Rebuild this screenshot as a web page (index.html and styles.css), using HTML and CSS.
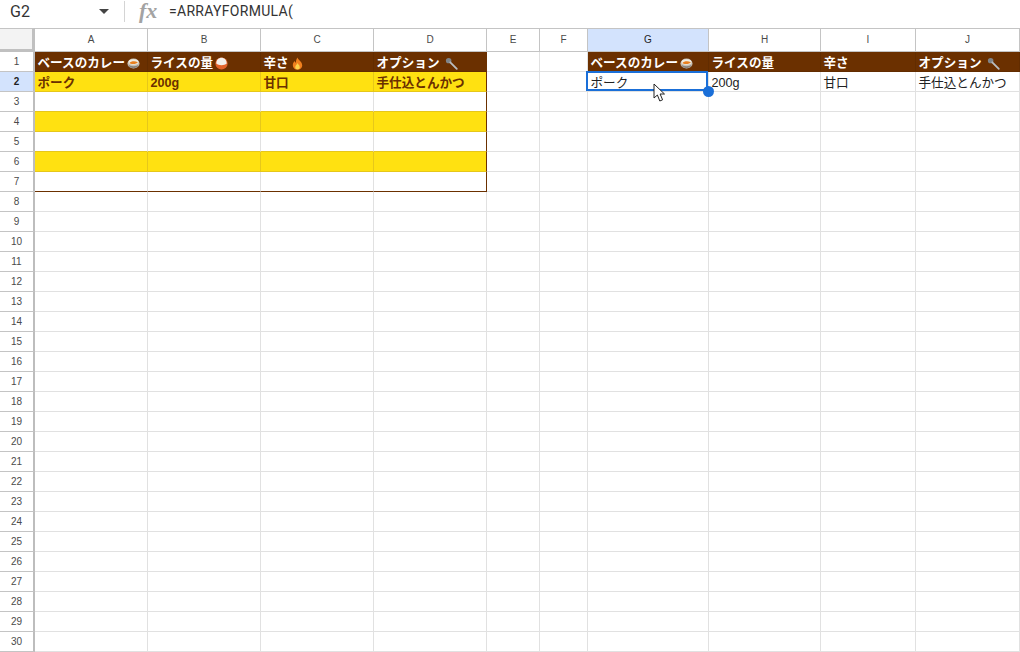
FILE: index.html
```html
<!DOCTYPE html>
<html lang="ja">
<head>
<meta charset="utf-8">
<title>Sheet</title>
<link rel="stylesheet" href="styles.css">
</head>
<body>
<svg class="defs" width="0" height="0" aria-hidden="true">
<symbol id="curry" viewBox="0 0 14 14"><ellipse cx="7" cy="7" rx="6.500" ry="5.500" fill="#c9c2b6"/><ellipse cx="7" cy="5.400" rx="5.400" ry="3" fill="#f0ece0"/><path d="M2.600 6.400c1.500-2 6-2.600 9-.8-.4 2-7.400 2.800-9 .8z" fill="#e8801f"/><path d="M1.400 8.200c2 2.400 9.200 2.400 11.200 0-.6 3-2.600 3.800-5.600 3.800s-5-.8-5.600-3.800z" fill="#8a847c"/></symbol>
<symbol id="rice" viewBox="0 0 16 16"><circle cx="8" cy="8" r="7.500" fill="#e2632a"/><path d="M1.600 8C1.600 3.600 4.500 1 8 1s6.400 2.600 6.400 7c-1.500 1.400-3.800 2-6.400 2s-4.900-.6-6.400-2z" fill="#f1efeb"/></symbol>
<symbol id="fire" viewBox="0 0 14 16"><path d="M7 .5c.6 3 5.800 5 5.800 9.500 0 3.400-2.700 5.500-5.800 5.500S1.200 13.400 1.200 10c0-2.400 1.300-3.700 2.300-5 .3 1.200.8 1.800 1.500 2.100C5 4.800 5.600 2.400 7 .5z" fill="#f0801e"/><path d="M7 7.500c.4 1.600 2.800 2.800 2.800 5 0 1.700-1.300 2.800-2.800 2.800s-2.800-1.100-2.800-2.800c0-2.200 2.300-3.200 2.800-5z" fill="#fbd24c"/></symbol>
<symbol id="spoon" viewBox="0 0 16 16"><ellipse cx="4.500" cy="4.500" rx="3.400" ry="3.200" fill="#7f8488"/><path d="M6.500 6.500l8 8" stroke="#b9bdc0" stroke-width="2.200" stroke-linecap="round"/></symbol>
</svg>
<header class="bar">
  <span class="ref">G2</span>
  <span class="caret"></span>
  <span class="sep"></span>
  <span class="fx">fx</span>
  <span class="formula">=ARRAYFORMULA(</span>
</header>
<table class="sheet">
<colgroup><col class="w0"><col class="w1"><col class="w1"><col class="w1"><col class="w1"><col class="w2"><col class="w3"><col class="w4"><col class="w5"><col class="w6"><col class="w7"></colgroup>
<thead>
<tr><th class="corner"></th><th>A</th><th>B</th><th>C</th><th>D</th><th>E</th><th>F</th><th class="on">G</th><th>H</th><th>I</th><th>J</th></tr>
</thead>
<tbody>
<tr><th>1</th><td class="hd"><span class="t">ベースのカレー<svg class="ic"><use href="#curry"/></svg></span></td><td class="hd"><span class="t">ライスの量<svg class="ic"><use href="#rice"/></svg></span></td><td class="hd"><span class="t">辛さ<svg class="ic"><use href="#fire"/></svg></span></td><td class="hd re"><span class="t">オプション<svg class="ic gap"><use href="#spoon"/></svg></span></td><td></td><td></td><td class="hd"><span class="t">ベースのカレー<svg class="ic"><use href="#curry"/></svg></span></td><td class="hd"><span class="t">ライスの量</span></td><td class="hd"><span class="t">辛さ</span></td><td class="hd"><span class="t">オプション<svg class="ic gap"><use href="#spoon"/></svg></span></td></tr>
<tr><th class="on">2</th><td class="ye">ポーク</td><td class="ye">200g</td><td class="ye">甘口</td><td class="ye re">手仕込とんかつ</td><td></td><td></td><td class="sel">ポーク<span class="box"></span><span class="handle"></span><svg class="cursor" viewBox="0 0 14 20"><path d="M1 1v14l3.400-3 2.400 6 2.800-1.200-2.500-5.800h4.400z" fill="#fff" stroke="#222" stroke-width="1"/></svg></td><td class="tx">200g</td><td class="tx">甘口</td><td class="tx">手仕込とんかつ</td></tr>
<tr><th>3</th><td class="pre"></td><td class="pre"></td><td class="pre"></td><td class="pre re"></td><td></td><td></td><td></td><td></td><td></td><td></td></tr>
<tr><th>4</th><td class="ye"></td><td class="ye"></td><td class="ye"></td><td class="ye re"></td><td></td><td></td><td></td><td></td><td></td><td></td></tr>
<tr><th>5</th><td class="pre"></td><td class="pre"></td><td class="pre"></td><td class="pre re"></td><td></td><td></td><td></td><td></td><td></td><td></td></tr>
<tr><th>6</th><td class="ye"></td><td class="ye"></td><td class="ye"></td><td class="ye re"></td><td></td><td></td><td></td><td></td><td></td><td></td></tr>
<tr><th>7</th><td class="be"></td><td class="be"></td><td class="be"></td><td class="be re"></td><td></td><td></td><td></td><td></td><td></td><td></td></tr>
<tr><th>8</th><td></td><td></td><td></td><td></td><td></td><td></td><td></td><td></td><td></td><td></td></tr>
<tr><th>9</th><td></td><td></td><td></td><td></td><td></td><td></td><td></td><td></td><td></td><td></td></tr>
<tr><th>10</th><td></td><td></td><td></td><td></td><td></td><td></td><td></td><td></td><td></td><td></td></tr>
<tr><th>11</th><td></td><td></td><td></td><td></td><td></td><td></td><td></td><td></td><td></td><td></td></tr>
<tr><th>12</th><td></td><td></td><td></td><td></td><td></td><td></td><td></td><td></td><td></td><td></td></tr>
<tr><th>13</th><td></td><td></td><td></td><td></td><td></td><td></td><td></td><td></td><td></td><td></td></tr>
<tr><th>14</th><td></td><td></td><td></td><td></td><td></td><td></td><td></td><td></td><td></td><td></td></tr>
<tr><th>15</th><td></td><td></td><td></td><td></td><td></td><td></td><td></td><td></td><td></td><td></td></tr>
<tr><th>16</th><td></td><td></td><td></td><td></td><td></td><td></td><td></td><td></td><td></td><td></td></tr>
<tr><th>17</th><td></td><td></td><td></td><td></td><td></td><td></td><td></td><td></td><td></td><td></td></tr>
<tr><th>18</th><td></td><td></td><td></td><td></td><td></td><td></td><td></td><td></td><td></td><td></td></tr>
<tr><th>19</th><td></td><td></td><td></td><td></td><td></td><td></td><td></td><td></td><td></td><td></td></tr>
<tr><th>20</th><td></td><td></td><td></td><td></td><td></td><td></td><td></td><td></td><td></td><td></td></tr>
<tr><th>21</th><td></td><td></td><td></td><td></td><td></td><td></td><td></td><td></td><td></td><td></td></tr>
<tr><th>22</th><td></td><td></td><td></td><td></td><td></td><td></td><td></td><td></td><td></td><td></td></tr>
<tr><th>23</th><td></td><td></td><td></td><td></td><td></td><td></td><td></td><td></td><td></td><td></td></tr>
<tr><th>24</th><td></td><td></td><td></td><td></td><td></td><td></td><td></td><td></td><td></td><td></td></tr>
<tr><th>25</th><td></td><td></td><td></td><td></td><td></td><td></td><td></td><td></td><td></td><td></td></tr>
<tr><th>26</th><td></td><td></td><td></td><td></td><td></td><td></td><td></td><td></td><td></td><td></td></tr>
<tr><th>27</th><td></td><td></td><td></td><td></td><td></td><td></td><td></td><td></td><td></td><td></td></tr>
<tr><th>28</th><td></td><td></td><td></td><td></td><td></td><td></td><td></td><td></td><td></td><td></td></tr>
<tr><th>29</th><td></td><td></td><td></td><td></td><td></td><td></td><td></td><td></td><td></td><td></td></tr>
<tr><th>30</th><td></td><td></td><td></td><td></td><td></td><td></td><td></td><td></td><td></td><td></td></tr>
</tbody>
</table>
</body>
</html>
```
FILE: styles.css
```css
html, body { margin: 0; padding: 0; background: #fff; }
body { width: 1020px; height: 652px; overflow: hidden; font-family: "Liberation Sans", "Noto Sans CJK JP", sans-serif; color: #222; }
.defs { display: block; height: 0; }
.bar { display: flex; align-items: center; height: 28px; padding-bottom: 6px; box-sizing: border-box; }
.ref { width: 89px; padding-left: 10px; box-sizing: content-box; font-size: 16px; color: #333; font-family: "Roboto", sans-serif; }
.caret { width: 0; height: 0; border-left: 5px solid transparent; border-right: 5px solid transparent; border-top: 5px solid #444; }
.sep { width: 1px; height: 21px; margin-left: 15px; background: #d4d4d4; }
.fx { width: 30px; margin-left: 14px; font: italic 700 22px/22px "Liberation Serif", serif; color: #a3a3a3; }
.formula { font: 14px "Roboto", sans-serif; color: #333; letter-spacing: .3px; }
.sheet { table-layout: fixed; width: 1020px; border-collapse: separate; border-spacing: 0; }
.w0 { width: 35px; } .w1 { width: 113px; } .w2 { width: 53px; } .w3 { width: 48px; }
.w4 { width: 121px; } .w5 { width: 112px; } .w6 { width: 95px; } .w7 { width: 104px; }
th, td { box-sizing: border-box; padding: 0; overflow: visible; white-space: nowrap; }
tbody tr { height: 20px; }
thead tr { height: 24px; }
th { font-weight: 400; font-size: 10px; color: #4a4a4a; text-align: center; background: #fff; border-right: 1px solid #c4c4c4; border-bottom: 1px solid #c4c4c4; }
thead th { border-top: 1px solid #c4c4c4; padding-bottom: 2px; }
tbody th { border-right: 2px solid #bdbdbd; }
th.corner { background: #f3f3f3; border-right: 3px solid #c0c0c0; border-bottom: 3px solid #c0c0c0; }
th.on { background: #d3e3fd; font-weight: 700; color: #1f1f1f; }
thead th.on { font-weight: 400; }
td { border-right: 1px solid #e1e1e1; border-bottom: 1px solid #e1e1e1; font-size: 12.6px; line-height: 16px; padding: 3px 0 0 2.5px; vertical-align: middle; }
td.hd { background: #6b3000; color: #fff; font-weight: 700; border-color: #622c00; }
.t { display: inline-flex; align-items: center; }
.ic { width: 13px; height: 13px; margin-left: 2px; flex: none; }
.ic.gap { margin-left: 6px; }
td.ye { background: #ffe111; color: #6b3000; font-weight: 700; border-color: #e6c71a; }
td.pre { border-bottom-color: #e6c71a; }
td.be { border-bottom-color: #6b3000; }
td.re { border-right-color: #6b3000; }
td.tx { color: #222; }
td.sel { position: relative; }
.box { position: absolute; left: -2px; top: -1px; right: 0; bottom: 0; border: 2px solid #1a6fd8; }
.handle { position: absolute; right: -6px; bottom: -6px; width: 11px; height: 11px; border-radius: 50%; background: #1a6fd8; }
.cursor { position: absolute; left: 65px; top: 11px; width: 14px; height: 20px; }
```
